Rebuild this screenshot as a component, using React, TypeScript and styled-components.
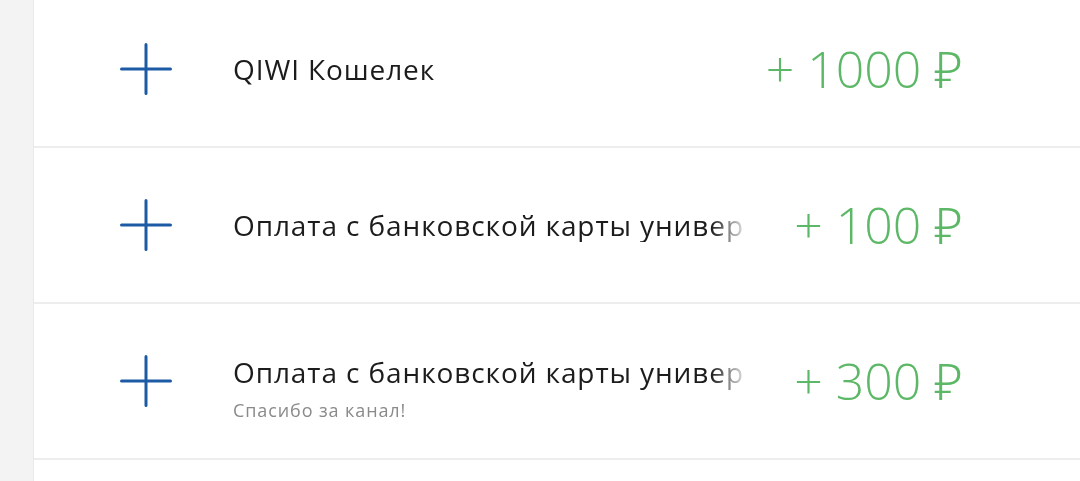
import React from "react";
import styled, { createGlobalStyle } from "styled-components";

type Payment = {
  id: number;
  title: string;
  comment?: string;
  amount: number;
};

// titles are cut where the screenshot cuts them, the end fades out
const payments: Payment[] = [
  { id: 1, title: "QIWI Кошелек", amount: 1000 },
  { id: 2, title: "Оплата с банковской карты универ", amount: 100 },
  {
    id: 3,
    title: "Оплата с банковской карты универ",
    comment: "Спасибо за канал!",
    amount: 300,
  },
];

const GlobalStyle = createGlobalStyle`
  html, body {
    margin: 0;
    padding: 0;
    background: #ffffff;
    overflow: hidden;
  }
  body {
    font-family: "Open Sans", "Noto Sans", "Liberation Sans", sans-serif;
  }
`;

const Page = styled.div`
  display: flex;
  width: 1080px;
  height: 481px;
  overflow: hidden;
`;

const Sidebar = styled.div`
  width: 33px;
  flex-shrink: 0;
  background: #f3f3f3;
  border-right: 1px solid #e9e9e9;
`;

const List = styled.div`
  flex: 1;
  display: flex;
  flex-direction: column;
  margin-top: -8px;
`;

const Row = styled.div`
  box-sizing: border-box;
  height: 156px;
  flex-shrink: 0;
  display: flex;
  align-items: center;
  padding: 0 117px 0 86px;
  border-bottom: 2px solid #ededed;
`;

const IconBox = styled.div`
  width: 52px;
  height: 52px;
  flex-shrink: 0;
  display: flex;
  align-items: center;
  justify-content: center;
  margin-right: 61px;
`;

const Info = styled.div<{ $withComment: boolean }>`
  width: 516px;
  flex-shrink: 0;
  display: flex;
  flex-direction: column;
  gap: 10px;
  padding-top: ${({ $withComment }) => ($withComment ? "14px" : "0")};
  mask-image: linear-gradient(to right, #000 calc(100% - 38px), transparent 100%);
  -webkit-mask-image: linear-gradient(to right, #000 calc(100% - 38px), transparent 100%);
`;

const Title = styled.div`
  font-size: 28px;
  line-height: 34px;
  letter-spacing: 0.9px;
  color: #1c1c1c;
  white-space: nowrap;
`;

const Comment = styled.div`
  font-size: 18px;
  line-height: 22px;
  letter-spacing: 0.9px;
  color: #8a8a8a;
  white-space: nowrap;
`;

const Amount = styled.div`
  flex: 1;
  text-align: right;
  font-size: 50px;
  font-weight: 300;
  color: #5cb866;
  white-space: nowrap;
`;

const PlusIcon = () => (
  <svg width="52" height="52" viewBox="0 0 52 52" fill="none">
    <path
      d="M26 1.5v49M1.5 26h49"
      stroke="#1d5aa5"
      strokeWidth="3"
      strokeLinecap="round"
    />
  </svg>
);

export default function App() {
  return (
    <>
      <GlobalStyle />
      <Page>
        <Sidebar />
        <List>
          {payments.map((p) => (
            <Row key={p.id}>
              <IconBox>
                <PlusIcon />
              </IconBox>
              <Info $withComment={!!p.comment}>
                <Title>{p.title}</Title>
                {p.comment && <Comment>{p.comment}</Comment>}
              </Info>
              <Amount>+ {p.amount} ₽</Amount>
            </Row>
          ))}
          <Row />
        </List>
      </Page>
    </>
  );
}
